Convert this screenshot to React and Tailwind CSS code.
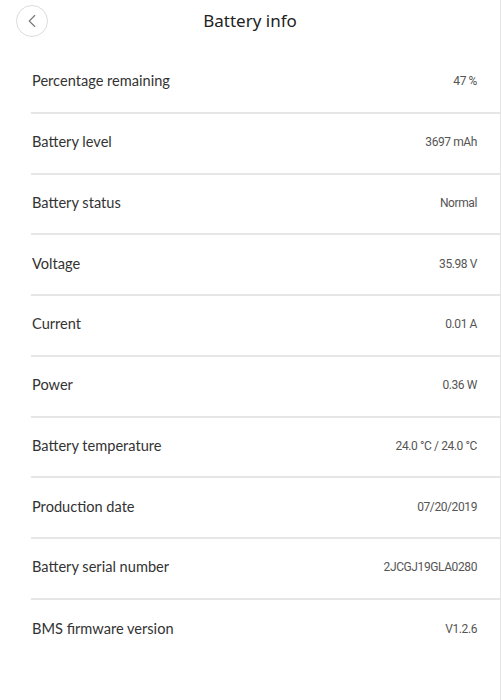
import { ChevronLeft } from "lucide-react";

const rows = [
  ["Percentage remaining", "47 %"],
  ["Battery level", "3697 mAh"],
  ["Battery status", "Normal"],
  ["Voltage", "35.98 V"],
  ["Current", "0.01 A"],
  ["Power", "0.36 W"],
  ["Battery temperature", "24.0 °C / 24.0 °C"],
  ["Production date", "07/20/2019"],
  ["Battery serial number", "2JCGJ19GLA0280"],
  ["BMS firmware version", "V1.2.6"],
];

export default function App() {
  return (
    <div
      className="min-h-[700px] w-[501px] border-r border-[#e4e4e4] bg-white"
      style={{ fontFamily: '"Noto Sans", "Open Sans", sans-serif' }}
    >
      {/* header */}
      <div className="relative flex h-[53px] items-start justify-center">
        <button className="absolute left-[16px] top-[5px] flex h-[32px] w-[32px] items-center justify-center rounded-full border border-[#dcdcdc] text-[#777]">
          <ChevronLeft size={22} strokeWidth={1.2} />
        </button>
        <h1 className="pt-[8px] text-[17px] leading-[26px] text-[#222]">Battery info</h1>
      </div>

      {/* list */}
      <div className="ml-[31px]">
        {rows.map(([label, value], i) => (
          <div
            key={label}
            className={`flex h-[60.75px] items-center justify-between pb-[2px] pl-[1px] pr-[23px] ${
              i < rows.length - 1 ? "border-b-2 border-[#e6e6e6]" : ""
            }`}
          >
            <span className="text-[14.6px] text-[#333]" style={{ fontFamily: "Lato, sans-serif" }}>
              {label}
            </span>
            <span
              className="text-[12px] tracking-[-0.4px] text-[#555]"
              style={{ fontFamily: "Roboto, sans-serif" }}
            >
              {value}
            </span>
          </div>
        ))}
      </div>
    </div>
  );
}
